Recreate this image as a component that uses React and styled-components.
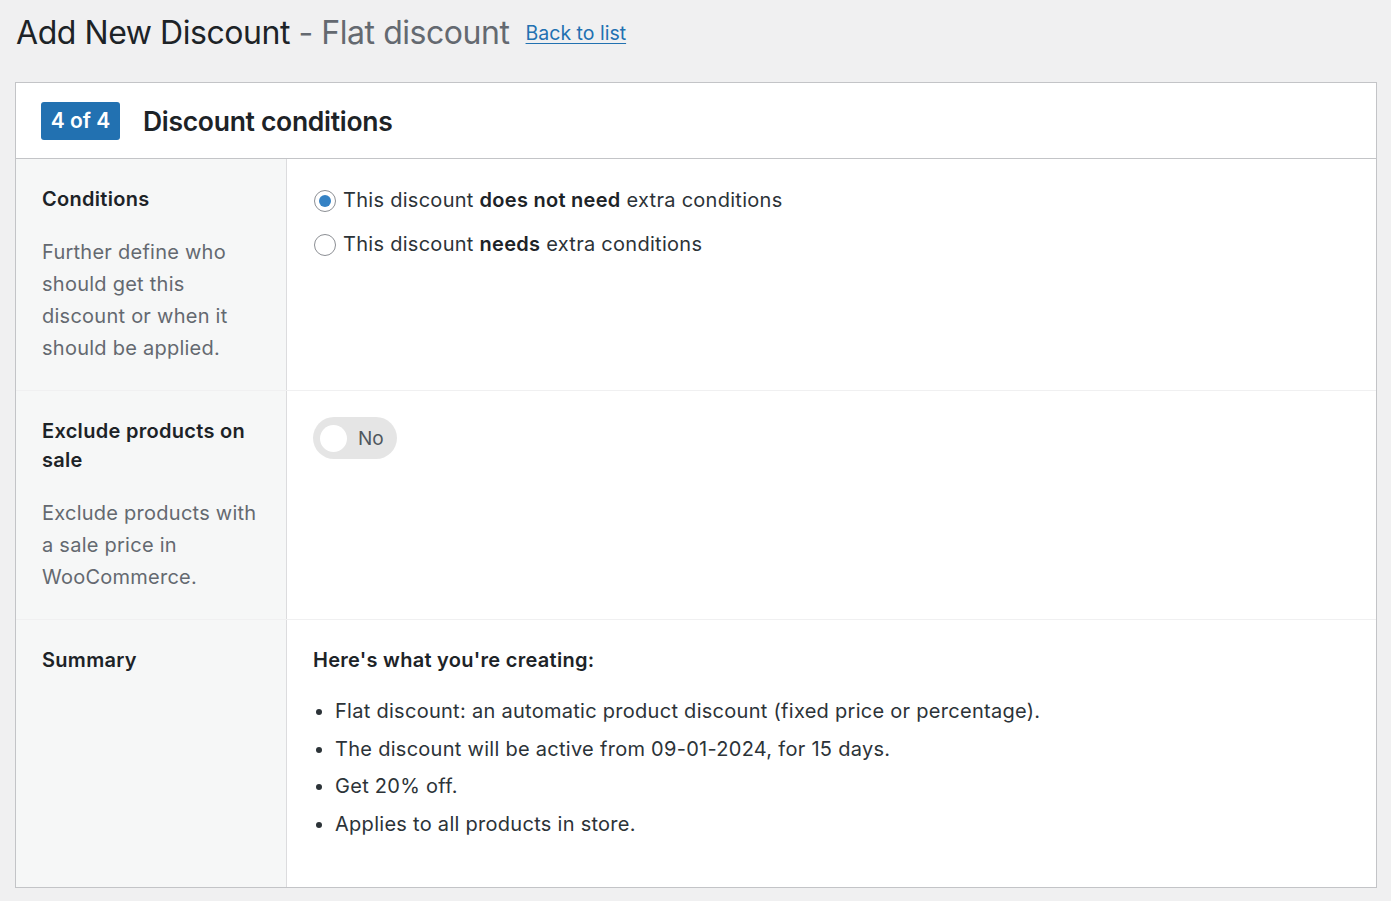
import React from 'react';
import styled, { createGlobalStyle } from 'styled-components';

const GlobalStyle = createGlobalStyle`
	body {
		margin: 0;
		background: #f0f0f1;
		font-family: Inter, "Noto Sans", sans-serif;
		color: #3c434a;
	}
`;

const Page = styled.div`
	padding: 8px 14px 12px 15px;
`;

const TitleBar = styled.div`
	display: flex;
	align-items: center;
	gap: 16px;
	height: 50px;
	padding: 0 0 0 1px;
	box-sizing: border-box;
`;

const PageTitle = styled.h1`
	margin: 0;
	font-size: 32px;
	line-height: 46px;
	font-weight: 400;
	letter-spacing: -0.45px;
	color: #1d2327;
`;

const SubTitle = styled.span`
	color: #646970;
`;

const BackLink = styled.a`
	font-size: 19.5px;
	line-height: 28px;
	color: #2271b1;
	text-decoration: underline;
	text-underline-offset: 3px;
`;

const Card = styled.section`
	margin-top: 24px;
	background: #fff;
	border: 1px solid #c3c4c7;
`;

const CardHeader = styled.header`
	display: flex;
	align-items: center;
	gap: 23px;
	height: 75px;
	padding-left: 25px;
	border-bottom: 1px solid #c3c4c7;
`;

const StepBadge = styled.span`
	display: inline-flex;
	align-items: center;
	justify-content: center;
	width: 79px;
	height: 38px;
	border-radius: 3px;
	background: #2271b1;
	color: #fff;
	font-size: 21px;
	font-weight: 600;
`;

const CardTitle = styled.h2`
	margin: 0;
	font-size: 26.5px;
	font-weight: 600;
	color: #1d2327;
	letter-spacing: -0.3px;
`;

const Row = styled.div`
	display: grid;
	grid-template-columns: 271px 1fr;
	box-sizing: border-box;
	min-height: ${(p) => p.minHeight || 0}px;
	border-top: ${(p) => (p.first ? 'none' : '1px solid #f0f0f1')};
`;

const LabelCell = styled.div`
	background: #f6f7f7;
	border-right: 1px solid #dcdcde;
	padding: 26px;
`;

const Label = styled.h3`
	margin: 0;
	font-size: 20px;
	line-height: 29px;
	font-weight: 600;
	letter-spacing: 0.3px;
	color: #1d2327;
`;

const Description = styled.p`
	margin: 22px 0 0;
	font-size: 20px;
	line-height: 32px;
	letter-spacing: 0.25px;
	color: #646970;
`;

const FieldCell = styled.div`
	padding: ${(p) => p.pad || '26px'};
	font-size: 20px;
	letter-spacing: 0.28px;
	color: #3c434a;
`;

const RadioList = styled.div`
	display: flex;
	flex-direction: column;
	gap: 15px;
`;

const RadioLabel = styled.label`
	display: flex;
	align-items: center;
	gap: 7px;
	line-height: 29px;
	color: #2c3338;

	b {
		font-weight: 600;
		color: #1d2327;
	}
`;

const RadioDot = styled.span`
	position: relative;
	width: 22px;
	height: 22px;
	margin-left: 1px;
	border-radius: 50%;
	border: 1px solid #8c8f94;
	box-sizing: border-box;
	background: #fff;
	flex: none;

	&::after {
		content: '';
		display: ${(p) => (p.checked ? 'block' : 'none')};
		position: absolute;
		left: 50%;
		top: 50%;
		width: 12px;
		height: 12px;
		margin: -6px 0 0 -6px;
		border-radius: 50%;
		background: #3582c4;
	}
`;

const Toggle = styled.div`
	display: inline-flex;
	align-items: center;
	gap: 11px;
	width: 84px;
	height: 42px;
	box-sizing: border-box;
	padding-left: 7px;
	border-radius: 21px;
	background: #e5e5e5;
	font-size: 19px;
	letter-spacing: 0;
	color: #50575e;
`;

const Knob = styled.span`
	width: 27px;
	height: 27px;
	border-radius: 50%;
	background: #fff;
`;

const SummaryTitle = styled.h4`
	margin: 0;
	font-size: 20px;
	line-height: 29px;
	font-weight: 600;
	color: #1d2327;
`;

const SummaryList = styled.ul`
	margin: 22px 0 0;
	padding-left: 22px;
	list-style: disc;
`;

const SummaryItem = styled.li`
	font-size: 20px;
	line-height: 29px;
	margin-bottom: 8.5px;
	color: #2c3338;
`;

const summary = [
	'Flat discount: an automatic product discount (fixed price or percentage).',
	'The discount will be active from 09-01-2024, for 15 days.',
	'Get 20% off.',
	'Applies to all products in store.',
];

export default function App() {
	return (
		<Page>
			<GlobalStyle />
			<TitleBar>
				<PageTitle>
					Add New Discount <SubTitle>- Flat discount</SubTitle>
				</PageTitle>
				<BackLink href="#">Back to list</BackLink>
			</TitleBar>
			<Card>
				<CardHeader>
					<StepBadge>4 of 4</StepBadge>
					<CardTitle>Discount conditions</CardTitle>
				</CardHeader>

				<Row first>
					<LabelCell>
						<Label>Conditions</Label>
						<Description>
							Further define who should get this discount or when it should be applied.
						</Description>
					</LabelCell>
					<FieldCell pad="27px 26px">
						<RadioList>
							<RadioLabel>
								<RadioDot checked />
								<span>
									This discount <b>does not need</b> extra conditions
								</span>
							</RadioLabel>
							<RadioLabel>
								<RadioDot />
								<span>
									This discount <b>needs</b> extra conditions
								</span>
							</RadioLabel>
						</RadioList>
					</FieldCell>
				</Row>

				<Row>
					<LabelCell>
						<Label>Exclude products on sale</Label>
						<Description>
							Exclude products with a sale price in WooCommerce.
						</Description>
					</LabelCell>
					<FieldCell>
						<Toggle>
							<Knob />
							No
						</Toggle>
					</FieldCell>
				</Row>

				<Row minHeight={268}>
					<LabelCell>
						<Label>Summary</Label>
					</LabelCell>
					<FieldCell>
						<SummaryTitle>Here's what you're creating:</SummaryTitle>
						<SummaryList>
							{summary.map((item) => (
								<SummaryItem key={item}>{item}</SummaryItem>
							))}
						</SummaryList>
					</FieldCell>
				</Row>
			</Card>
		</Page>
	);
}
